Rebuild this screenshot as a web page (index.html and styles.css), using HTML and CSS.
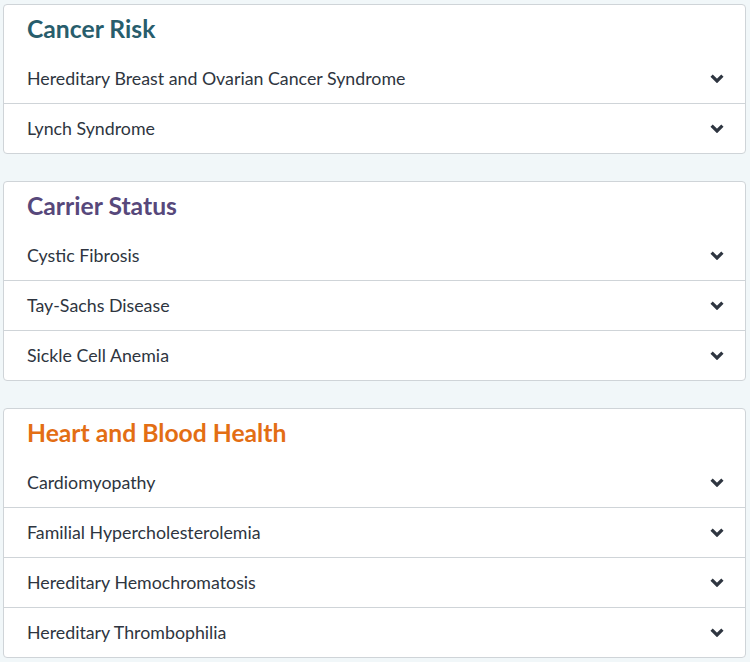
FILE: index.html
```html
<!DOCTYPE html>
<html lang="en">
<head>
<meta charset="utf-8">
<title>Genetic Health</title>
<link rel="stylesheet" href="styles.css">
</head>
<body>
<main class="page">
  <section class="card">
    <h2 class="card-title title-cancer">Cancer Risk</h2>
    <ul class="rows">
      <li class="row"><span class="row-label">Hereditary Breast and Ovarian Cancer Syndrome</span><svg class="chev" viewBox="0 0 14 9"><path d="M1.6 1.6 L7 7 L12.4 1.6"/></svg></li>
      <li class="row"><span class="row-label">Lynch Syndrome</span><svg class="chev" viewBox="0 0 14 9"><path d="M1.6 1.6 L7 7 L12.4 1.6"/></svg></li>
    </ul>
  </section>
  <section class="card">
    <h2 class="card-title title-carrier">Carrier Status</h2>
    <ul class="rows">
      <li class="row"><span class="row-label">Cystic Fibrosis</span><svg class="chev" viewBox="0 0 14 9"><path d="M1.6 1.6 L7 7 L12.4 1.6"/></svg></li>
      <li class="row"><span class="row-label">Tay-Sachs Disease</span><svg class="chev" viewBox="0 0 14 9"><path d="M1.6 1.6 L7 7 L12.4 1.6"/></svg></li>
      <li class="row"><span class="row-label">Sickle Cell Anemia</span><svg class="chev" viewBox="0 0 14 9"><path d="M1.6 1.6 L7 7 L12.4 1.6"/></svg></li>
    </ul>
  </section>
  <section class="card">
    <h2 class="card-title title-heart">Heart and Blood Health</h2>
    <ul class="rows">
      <li class="row"><span class="row-label">Cardiomyopathy</span><svg class="chev" viewBox="0 0 14 9"><path d="M1.6 1.6 L7 7 L12.4 1.6"/></svg></li>
      <li class="row"><span class="row-label">Familial Hypercholesterolemia</span><svg class="chev" viewBox="0 0 14 9"><path d="M1.6 1.6 L7 7 L12.4 1.6"/></svg></li>
      <li class="row"><span class="row-label">Hereditary Hemochromatosis</span><svg class="chev" viewBox="0 0 14 9"><path d="M1.6 1.6 L7 7 L12.4 1.6"/></svg></li>
      <li class="row"><span class="row-label">Hereditary Thrombophilia</span><svg class="chev" viewBox="0 0 14 9"><path d="M1.6 1.6 L7 7 L12.4 1.6"/></svg></li>
    </ul>
  </section>
</main>
</body>
</html>
```
FILE: styles.css
```css
html, body {
  margin: 0;
  padding: 0;
  background: #f1f7f9;
}
body {
  font-family: Lato, "Open Sans", sans-serif;
  color: #2e3540;
}
.page {
  display: flex;
  flex-direction: column;
  gap: 27px;
  padding: 4px 4px 0 3px;
}
.card {
  background: #ffffff;
  border: 1px solid #cfd4d8;
  border-radius: 4px;
}
.card-title {
  margin: 0;
  height: 49px;
  box-sizing: border-box;
  display: flex;
  align-items: center;
  padding: 0 23px 2px;
  font-size: 24.7px;
  font-weight: 700;
}
.title-cancer { color: #285d6c; }
.title-carrier { color: #57487b; }
.title-heart { color: #e36e14; }
.rows {
  list-style: none;
  margin: 0;
  padding: 0;
}
.row {
  height: 49px;
  box-sizing: border-box;
  display: flex;
  align-items: center;
  justify-content: space-between;
  padding: 0 21px 2px 23px;
  font-size: 17.8px;
}
.row + .row {
  height: 50px;
  border-top: 1px solid #cfd4d8;
}
.chev {
  width: 14px;
  height: 9px;
  margin-top: 2px;
  fill: none;
  stroke: #2e3540;
  stroke-width: 3.2;
  stroke-linecap: butt;
  stroke-linejoin: miter;
}
```
